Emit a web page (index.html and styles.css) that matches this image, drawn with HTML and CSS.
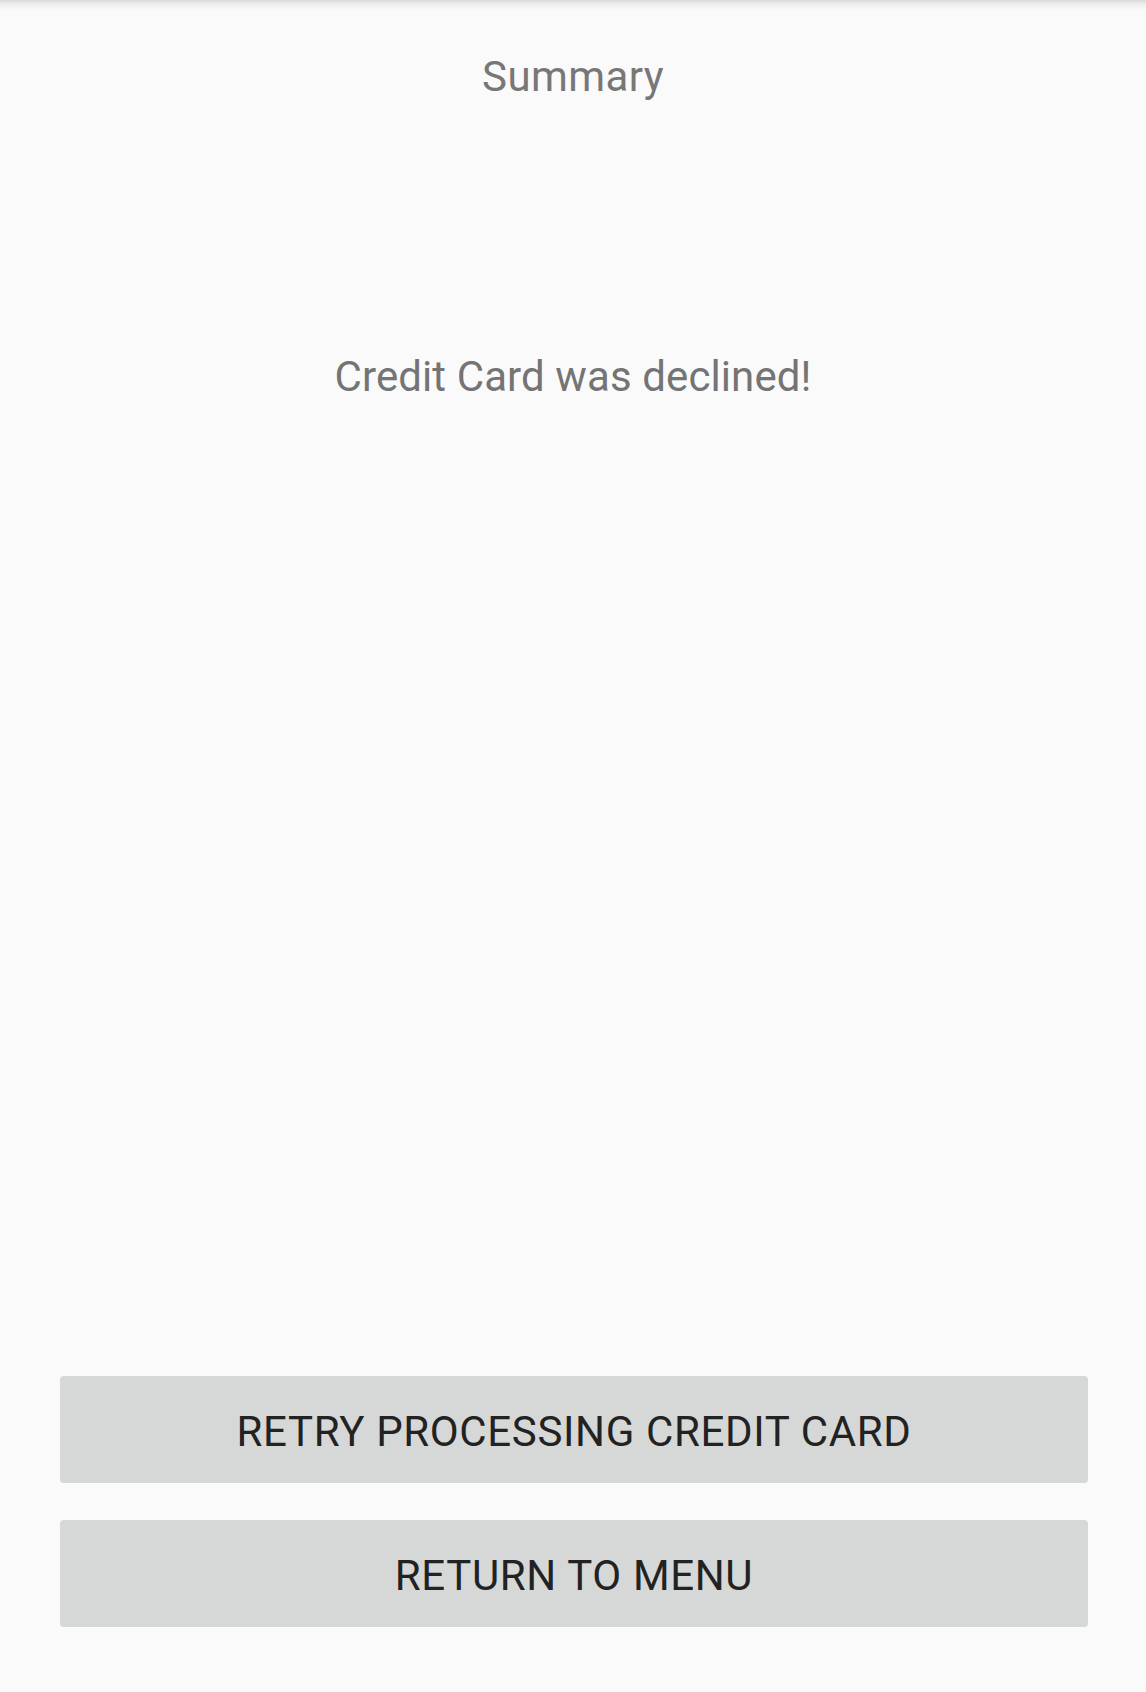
FILE: index.html
```html
<!DOCTYPE html>
<html lang="en">
<head>
<meta charset="utf-8">
<title>Summary</title>
<link rel="stylesheet" href="styles.css">
</head>
<body>
<div class="screen">
  <div class="shadow"></div>
  <h1 class="title">Summary</h1>
  <p class="message">Credit Card was declined!</p>
  <div class="actions">
    <button class="btn" type="button">RETRY PROCESSING CREDIT CARD</button>
    <button class="btn" type="button">RETURN TO MENU</button>
  </div>
</div>
</body>
</html>
```
FILE: styles.css
```css
html, body {
  margin: 0;
  padding: 0;
  background: #fafafa;
}
.screen {
  position: relative;
  display: flex;
  flex-direction: column;
  min-height: 100vh;
  box-sizing: border-box;
  font-family: Roboto, "Liberation Sans", sans-serif;
}
.shadow {
  position: absolute;
  top: 0;
  left: 0;
  right: 0;
  height: 12px;
  background: linear-gradient(to bottom, #d9d9d9 0%, #ececec 30%, #f6f6f6 65%, #fafafa 100%);
}
.title {
  margin: 52px 0 0;
  font-size: 42px;
  font-weight: 400;
  line-height: 49px;
  letter-spacing: 0.4px;
  text-align: center;
  color: #777777;
}
.message {
  margin: 251px 0 0;
  font-size: 42px;
  line-height: 49px;
  letter-spacing: 0.1px;
  text-align: center;
  color: #747474;
}
.actions {
  margin-top: auto;
  display: flex;
  flex-direction: column;
  gap: 37px;
  padding: 0 58px 65px 60px;
}
.btn {
  height: 107px;
  border: none;
  border-radius: 4px;
  background: #d6d7d7;
  color: #222222;
  font-family: Roboto, "Liberation Sans", sans-serif;
  font-size: 42px;
  font-weight: 400;
  letter-spacing: 0.65px;
  padding: 4px 0 0;
  text-align: center;
}
```
